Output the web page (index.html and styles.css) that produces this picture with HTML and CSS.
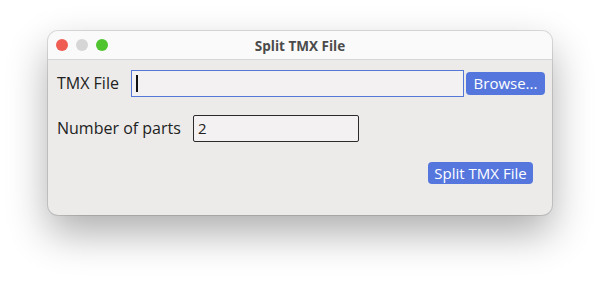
FILE: index.html
```html
<!DOCTYPE html>
<html lang="en">
  <head>
    <meta charset="UTF-8" />
    <title>Split TMX File</title>
    <link rel="stylesheet" href="styles.css">
  </head>
  <body>
    <div class="window">
      <div class="titlebar">
        <div class="lights">
          <span class="light red"></span>
          <span class="light gray"></span>
          <span class="light green"></span>
        </div>
        <div class="title">Split TMX File</div>
      </div>
      <div class="content">
        <div class="row">
          <label for="tmx-file" class="label label-file">TMX File</label>
          <div class="field field-file focused"><span class="caret"></span></div>
          <button class="btn btn-browse">Browse...</button>
        </div>
        <div class="row row-parts">
          <label for="parts" class="label label-parts">Number of parts</label>
          <div class="field field-parts">2</div>
        </div>
        <div class="actions">
          <button class="btn btn-split">Split TMX File</button>
        </div>
      </div>
    </div>
  </body>
</html>
```

FILE: styles.css
```css
html,
body {
  height: 100%;
}

body {
  margin: 0;
  padding: 31px 0 0 48px;
  box-sizing: border-box;
  background-color: #fff;
  font-family: "Open Sans", "Liberation Sans", sans-serif;
  color: #222;
}

.window {
  width: 504px;
  height: 184px;
  border-radius: 10px;
  background-color: #ecebea;
  box-shadow: 0 0 0 1px rgba(0, 0, 0, 0.12), 0 18px 40px rgba(0, 0, 0, 0.32);
  overflow: hidden;
}

.titlebar {
  position: relative;
  height: 28px;
  background-color: #fafafa;
  border-bottom: 1px solid #d6d6d6;
  display: flex;
  align-items: center;
  justify-content: center;
}

.lights {
  position: absolute;
  left: 8px;
  top: 8px;
  display: flex;
  gap: 8px;
}

.light {
  width: 12px;
  height: 12px;
  border-radius: 50%;
}

.red {
  background-color: #ee5c52;
}

.gray {
  background-color: #d7d6d6;
}

.green {
  background-color: #4fc42e;
}

.title {
  font-size: 13.5px;
  font-weight: bold;
  color: #4b4b4b;
  margin-top: 1px;
}

.content {
  padding: 9px 7px 0 9px;
}

.row {
  display: flex;
  align-items: center;
  height: 28px;
}

.row-parts {
  margin-top: 17px;
}

.label {
  font-size: 16px;
  color: #222;
}

.label-file {
  width: 74px;
}

.label-parts {
  width: 136px;
}

.field {
  box-sizing: border-box;
  height: 27px;
  background-color: #f3f1f1;
  font-size: 15px;
  display: flex;
  align-items: center;
}

.field-file {
  width: 333px;
  border: 1px solid #5577d8;
  padding-left: 4px;
}

.caret {
  width: 2px;
  height: 17px;
  background-color: #111;
}

.field-parts {
  width: 166px;
  border: 1px solid #2b2b2b;
  border-radius: 2px;
  padding-left: 4px;
}

.btn {
  box-sizing: border-box;
  border: none;
  border-radius: 4px;
  background-color: #5577dd;
  color: #fff;
  font-family: "Open Sans", "Liberation Sans", sans-serif;
  font-size: 15px;
  padding: 0;
}

.btn-browse {
  width: 79px;
  height: 23px;
  margin-left: 2px;
}

.actions {
  display: flex;
  justify-content: flex-end;
  margin-top: 20px;
  padding-right: 12px;
}

.btn-split {
  width: 105px;
  height: 22px;
}
```
